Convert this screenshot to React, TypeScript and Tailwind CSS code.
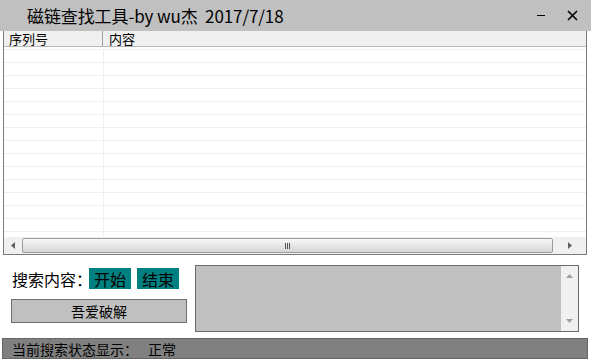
import React from 'react';

const rows = Array.from({ length: 15 });

export default function App() {
  return (
    <div
      className="relative w-[591px] h-[361px] overflow-hidden bg-white text-black"
      style={{ fontFamily: '"Noto Sans CJK SC", "Noto Sans", sans-serif' }}
    >
      {/* Title bar */}
      <div className="flex h-[31px] items-center bg-[#c0c0c0]">
        <div className="pl-[27px] text-[17px] leading-none tracking-[-0.1px]">
          磁链查找工具-by wu杰&nbsp;&nbsp;2017/7/18
        </div>
        <div className="ml-auto flex items-center">
          <div className="mr-[22px] h-[1px] w-[8px] bg-black" />
          <svg width="11" height="11" viewBox="0 0 11 11" className="mr-[13px]">
            <path d="M1 1 L10 10 M10 1 L1 10" stroke="#000" strokeWidth="1.6" />
          </svg>
        </div>
      </div>

      {/* List view */}
      <div className="ml-[3px] flex h-[224px] w-[584px] flex-col border-x border-b border-[#7a7a7a]">
        <div className="flex h-[16px] shrink-0 items-center border-b border-[#b8b8b8] bg-[#f0f0f0] text-[13px] leading-none">
          <div className="flex h-full w-[99px] items-center border-r border-[#a0a0a0] pl-[5px]">序列号</div>
          <div className="pl-[6px]">内容</div>
        </div>
        <div className="flex-1 overflow-hidden pt-[2px]">
          {rows.map((_, i) => (
            <div key={i} className="flex h-[13px] border-t border-[#efefef]">
              <div className="w-[100px] border-r border-[#efefef]" />
            </div>
          ))}
        </div>
        {/* Horizontal scrollbar */}
        <div className="flex h-[17px] shrink-0 items-center bg-[#f0f0f0]">
          <div className="flex w-[18px] justify-center">
            <svg width="4" height="7" viewBox="0 0 4 7">
              <path d="M4 0 L0 3.5 L4 7 Z" fill="#606060" />
            </svg>
          </div>
          <div className="flex h-[15px] w-[531px] items-center justify-center rounded-[2px] border border-[#9c9c9c] bg-gradient-to-b from-[#f7f7f7] to-[#d6d6d6]">
            <div className="flex gap-[1px]">
              <div className="h-[6px] w-[1px] bg-[#555]" />
              <div className="h-[6px] w-[1px] bg-[#555]" />
              <div className="h-[6px] w-[1px] bg-[#555]" />
            </div>
          </div>
          <div className="flex flex-1 justify-center">
            <svg width="4" height="7" viewBox="0 0 4 7">
              <path d="M0 0 L4 3.5 L0 7 Z" fill="#606060" />
            </svg>
          </div>
        </div>
      </div>

      {/* Controls */}
      <div className="flex h-[83px]">
        <div className="ml-[11px] w-[176px] pt-[13px]">
          <div className="flex h-[21px] items-center text-[16px] leading-none">
            <span className="ml-[1px] w-[77px] whitespace-nowrap">搜索内容：</span>
            <div className="flex h-[21px] w-[42px] items-center justify-center bg-[#008080]">开始</div>
            <div className="ml-[6px] flex h-[21px] w-[42px] items-center justify-center bg-[#008080]">结束</div>
          </div>
          <div className="mt-[10px] flex h-[24px] w-[176px] items-center justify-center border border-[#707070] bg-[#c0c0c0] text-[14px] leading-none">
            吾爱破解
          </div>
        </div>
        <div className="ml-[8px] mt-[10px] flex h-[67px] w-[384px] border border-[#6a6a6a] bg-[#c0c0c0]">
          <div className="flex-1" />
          <div className="flex w-[17px] flex-col items-center justify-between bg-[#f0f0f0] py-[8px]">
            <svg width="7" height="4" viewBox="0 0 7 4">
              <path d="M0 4 L3.5 0 L7 4 Z" fill="#a0a0a0" />
            </svg>
            <svg width="7" height="4" viewBox="0 0 7 4">
              <path d="M0 0 L3.5 4 L7 0 Z" fill="#a0a0a0" />
            </svg>
          </div>
        </div>
      </div>

      {/* Status bar */}
      <div className="ml-[2px] flex h-[21px] w-[586px] items-center border border-[#666] bg-[#808080] text-[14px] leading-none">
        <div className="relative flex h-full items-center pl-[9px]">
          <div className="absolute left-[46px] top-0 h-full w-[1px] bg-[#6e6e6e]" />
          <span className="w-[128px] whitespace-nowrap">当前搜索状态显示：</span>
          <span className="ml-[8px]">正常</span>
        </div>
      </div>
    </div>
  );
}
